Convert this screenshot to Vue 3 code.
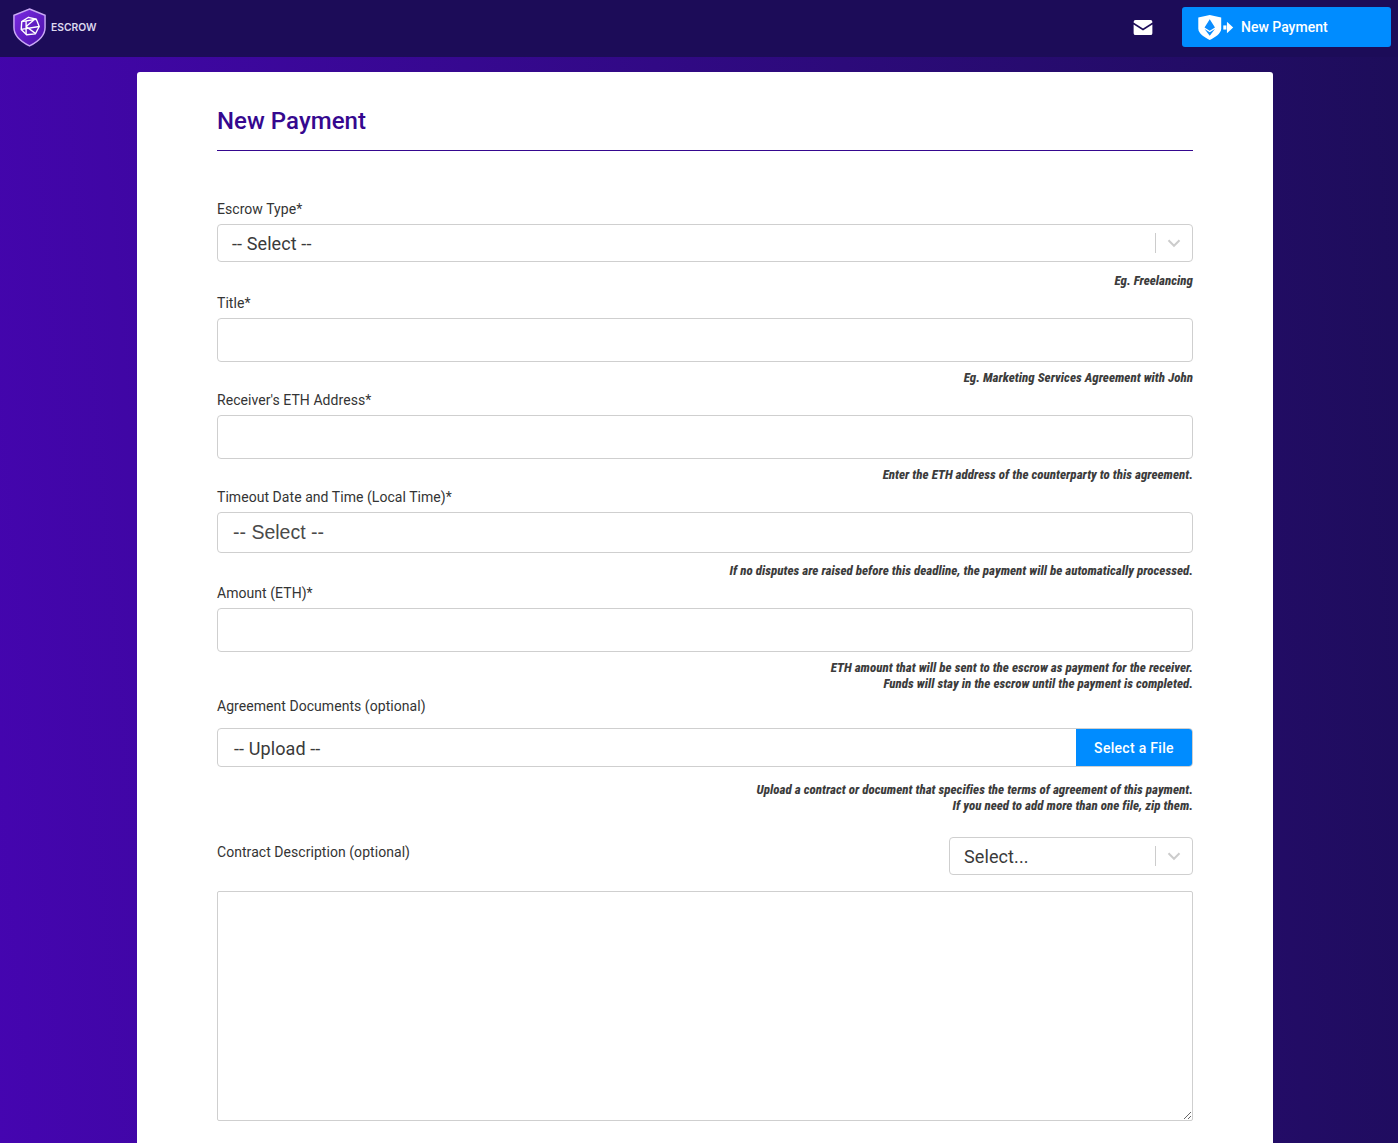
<script setup>
const fields = [
  { label: 'Title*', hints: ['Eg. Marketing Services Agreement with John'] },
  { label: "Receiver's ETH Address*", hints: ['Enter the ETH address of the counterparty to this agreement.'] },
]
</script>

<template>
  <div class="page">
    <header class="topbar">
      <div class="brand">
        <svg class="shield" viewBox="0 0 36 40" aria-hidden="true">
          <defs>
            <linearGradient id="sh" x1="0" y1="0" x2="1" y2="1">
              <stop offset="0" stop-color="#7a2be2" />
              <stop offset="1" stop-color="#4a10a8" />
            </linearGradient>
          </defs>
          <path d="M18 1 L34 7.500 V20 C34 29 26 35 18 39 C10 35 2 29 2 20 V7.500 Z" fill="url(#sh)" stroke="#c9a8f5" stroke-width="1.500" />
          <g fill="none" stroke="#fff" stroke-width="1.400" stroke-linejoin="round">
            <path d="M17 9.500 L25 11.500 L28 19 L24 26.500 L15 27.500 L9.500 22 L10 14 Z" />
            <path d="M14.500 12.500 V27 M14.500 19 L24 11 M14.500 19 L24 26 M10 14 L25 11.500 M9.500 22 L28 19" />
          </g>
        </svg>
        <span class="brand-name">ESCROW</span>
      </div>
      <div class="actions">
        <svg class="mail" viewBox="0 0 20 16" aria-hidden="true">
          <path d="M2 0 H18 A2 2 0 0 1 20 2 V2.600 L10 9 L0 2.600 V2 A2 2 0 0 1 2 0 Z M0 4.800 L10 11.200 L20 4.800 V14 A2 2 0 0 1 18 16 H2 A2 2 0 0 1 0 14 Z" fill="#fff" />
        </svg>
        <button class="new-btn" type="button">
          <svg class="btn-icon" viewBox="0 0 34 24" aria-hidden="true">
            <path d="M0 2.500 L11 0 L22 2.500 V13 C22 18 16 21.500 11 24 C6 21.500 0 18 0 13 Z" fill="#fff" />
            <path d="M11 4 L16 12 L11 15 L6 12 Z M6 13.500 L11 16.500 L16 13.500 L11 20 Z" fill="#0a8dff" />
            <rect x="24" y="10" width="3" height="4" fill="#fff" />
            <path d="M27.500 6.500 L33.500 12 L27.500 17.500 Z" fill="#fff" />
          </svg>
          <span>New Payment</span>
        </button>
      </div>
    </header>

    <main class="card">
      <h1 class="title">New Payment</h1>

      <form class="form">
        <div class="field">
          <label class="label">Escrow Type*</label>
          <div class="control select">
            <span class="value">-- Select --</span>
            <span class="sep"></span>
            <svg class="chev" viewBox="0 0 20 20" aria-hidden="true"><path d="M4.500 7.300 L10 12.800 L15.500 7.300" /></svg>
          </div>
          <p class="hints wide">Eg. Freelancing</p>
        </div>

        <div v-for="f in fields" :key="f.label" class="field">
          <label class="label">{{ f.label }}</label>
          <div class="control input"></div>
          <p class="hints">{{ f.hints[0] }}</p>
        </div>

        <div class="field">
          <label class="label">Timeout Date and Time (Local Time)*</label>
          <div class="control date"><span class="value">-- Select --</span></div>
          <p class="hints mid">If no disputes are raised before this deadline, the payment will be automatically processed.</p>
        </div>

        <div class="field">
          <label class="label">Amount (ETH)*</label>
          <div class="control input"></div>
          <p class="hints">ETH amount that will be sent to the escrow as payment for the receiver.<br />Funds will stay in the escrow until the payment is completed.</p>
        </div>

        <div class="field upload-field">
          <label class="label">Agreement Documents (optional)</label>
          <div class="control upload">
            <span class="value">-- Upload --</span>
            <span class="file-btn">Select a File</span>
          </div>
          <p class="hints far">Upload a contract or document that specifies the terms of agreement of this payment.<br />If you need to add more than one file, zip them.</p>
        </div>

        <div class="desc-row">
          <label class="label">Contract Description (optional)</label>
          <div class="control select small">
            <span class="value">Select...</span>
            <span class="sep"></span>
            <svg class="chev" viewBox="0 0 20 20" aria-hidden="true"><path d="M4.500 7.300 L10 12.800 L15.500 7.300" /></svg>
          </div>
        </div>
        <textarea class="area"></textarea>
      </form>
    </main>
  </div>
</template>

<style>
html, body { margin: 0; }
</style>

<style scoped>
.page {
  height: 1143px;
  overflow: hidden;
  background: linear-gradient(85deg, #4505b0 0%, #1d0d5a 100%);
  font-family: Roboto, "Liberation Sans", sans-serif;
  color: #343434;
}
.topbar {
  height: 57px;
  box-sizing: border-box;
  background: #1c0c58;
  display: flex;
  align-items: center;
  justify-content: space-between;
  padding: 0 7px 3px 12px;
}
.brand { display: flex; align-items: center; gap: 4px; }
.shield { width: 35px; height: 39px; }
.brand-name {
  font-family: Inter, "Liberation Sans", sans-serif;
  font-size: 10.3px;
  font-weight: 600;
  color: #dcd8ee;
}
.actions { display: flex; align-items: center; gap: 29px; }
.mail { width: 20px; height: 15px; }
.new-btn {
  width: 209px;
  height: 40px;
  border: 0;
  border-radius: 3px;
  background: #008cff;
  color: #fff;
  display: flex;
  align-items: center;
  gap: 7px;
  padding: 0 0 0 16px;
  font: 500 14px Roboto, sans-serif;
}
.btn-icon { width: 36px; height: 25px; }
.card {
  width: 1136px;
  box-sizing: border-box;
  margin: 15px 0 0 137px;
  height: 1200px;
  background: #fff;
  border-radius: 3px;
  padding: 31px 80px 0;
}
.title {
  margin: 0;
  height: 47px;
  line-height: 36px;
  border-bottom: 1px solid #35088f;
  font-size: 24px;
  font-weight: 500;
  letter-spacing: 0.05px;
  color: #35088f;
}
.form { padding-top: 49px; }
.field { margin-bottom: 5px; }
.label {
  display: block;
  height: 18px;
  line-height: 18px;
  margin-bottom: 6px;
  font-size: 14px;
  letter-spacing: 0.05px;
}
.control {
  box-sizing: border-box;
  border: 1px solid #cfcfcf;
  border-radius: 4px;
  background: #fff;
  display: flex;
  align-items: center;
}
.value { font-size: 18px; color: #3a3a3a; letter-spacing: 0.1px; }
.select { height: 38px; padding-left: 14px; }
.select .value { flex: 1; }
.sep { width: 1px; height: 20px; background: #cccccc; }
.chev { width: 20px; height: 20px; margin: 0 8px; }
.chev path { fill: none; stroke: #cccccc; stroke-width: 2; }
.input { height: 44px; }
.date { height: 41px; padding-left: 15px; }
.date .value {
  font-family: "Liberation Sans", sans-serif;
  font-size: 19.5px;
  letter-spacing: 0;
  color: #4a4a4a;
}
.upload { height: 39px; padding-left: 16px; justify-content: space-between; margin-top: 13px; overflow: hidden; }
.upload .value { padding-top: 1px; }
.upload-field .label { margin-bottom: 0; height: 18px; }
.file-btn {
  width: 116px;
  height: 37px;
  background: #008cff;
  color: #fff;
  font-size: 14px;
  font-weight: 500;
  letter-spacing: 0.3px;
  display: flex;
  align-items: center;
  justify-content: center;
}
.hints {
  margin: 8px 0 0;
  text-align: right;
  font-size: 13px;
  line-height: 16px;
  font-style: italic;
  font-weight: 800;
  font-stretch: condensed;
  color: #3c3c3c;
  letter-spacing: 0.02px;
}
.hints.wide { margin-top: 11px; }
.hints.mid { margin-top: 10px; }
.hints.far { margin-top: 15px; }
.desc-row {
  margin-top: 23px;
  display: flex;
  justify-content: space-between;
  align-items: flex-start;
}
.desc-row .label { margin-top: 6px; }
.small { width: 244px; }
.area {
  display: block;
  box-sizing: border-box;
  width: 100%;
  height: 230px;
  margin-top: 16px;
  border: 1px solid #cfcfcf;
  border-radius: 2px;
  outline: none;
}
</style>
